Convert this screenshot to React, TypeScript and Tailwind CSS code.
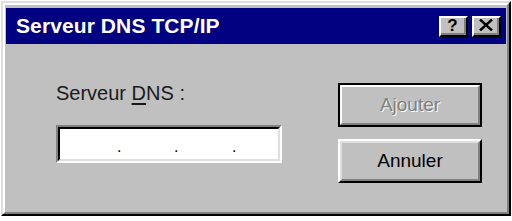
import React from "react";

const font = { fontFamily: '"Liberation Sans", Arial, sans-serif' };

function TitleButton({ children }: { children: React.ReactNode }) {
  return (
    <div className="h-[21px] w-[29px] border-t-2 border-l-2 border-r-2 border-b-2 border-t-white border-l-white border-r-black border-b-black bg-[#c0c0c0]">
      <div className="flex h-full w-full items-center justify-center border-r-2 border-b-2 border-r-[#808080] border-b-[#808080] text-[17px] font-bold leading-none text-black">
        {children}
      </div>
    </div>
  );
}

export default function App() {
  return (
    <div className="h-[221px] w-[512px] bg-white pl-[1px] pt-[1px]" style={font}>
      <div className="flex h-[215px] w-[510px] flex-col border-2 border-t-[#dfdfdf] border-l-[#dfdfdf] border-r-black border-b-black bg-[#c0c0c0]">
        <div className="flex flex-1 flex-col border-2 border-t-white border-l-white border-r-[#808080] border-b-[#808080] px-[1px] pt-[3px]">
          {/* title bar */}
          <div className="flex h-[36px] items-center justify-between bg-[#000080] pl-[10px] pr-[5px]">
            <span className="text-[21px] font-bold tracking-[0.1px] text-white">Serveur DNS TCP/IP</span>
            <div className="flex items-center gap-[4px]">
              <TitleButton>?</TitleButton>
              <TitleButton>
                <svg width="14" height="12" viewBox="0 0 14 12">
                  <path d="M1 0.5 L13 11.5 M13 0.5 L1 11.5" stroke="black" strokeWidth="2.4" />
                </svg>
              </TitleButton>
            </div>
          </div>

          {/* client area */}
          <div className="flex flex-1 justify-between">
            <div className="ml-[50px] mt-[37px] flex flex-col">
              <div className="h-[24px] text-[20px] leading-[24px] text-[#1a1a1a]">
                Serveur <span className="underline underline-offset-[3px]">D</span>NS :
              </div>
              <div className="mt-[20px] h-[38px] w-[226px] border-2 border-t-[#808080] border-l-[#808080] border-r-white border-b-white">
                <div className="flex h-full w-full items-center border-2 border-t-black border-l-black border-r-[#dfdfdf] border-b-[#dfdfdf] bg-white pl-[57px] text-[16px] leading-none text-black">
                  <span className="w-[57px] pt-[6px]">.</span>
                  <span className="w-[58px] pt-[6px]">.</span>
                  <span className="pt-[6px]">.</span>
                </div>
              </div>
            </div>

            <div className="mr-[24px] mt-[39px] flex flex-col gap-[12px]">
              <div className="h-[44px] w-[144px] border-2 border-black">
                <div className="h-full w-full border-2 border-t-white border-l-white border-r-[#808080] border-b-[#808080]">
                  <div className="flex h-full w-full items-center justify-center text-[19px] text-[#808080] [text-shadow:1px_1px_0_#fff]">
                    Ajouter
                  </div>
                </div>
              </div>
              <div className="h-[44px] w-[144px] border-2 border-t-white border-l-white border-r-black border-b-black">
                <div className="flex h-full w-full items-center justify-center border-2 border-t-[#dfdfdf] border-l-[#dfdfdf] border-r-[#808080] border-b-[#808080] text-[19px] text-black">
                  Annuler
                </div>
              </div>
            </div>
          </div>
        </div>
      </div>
    </div>
  );
}
